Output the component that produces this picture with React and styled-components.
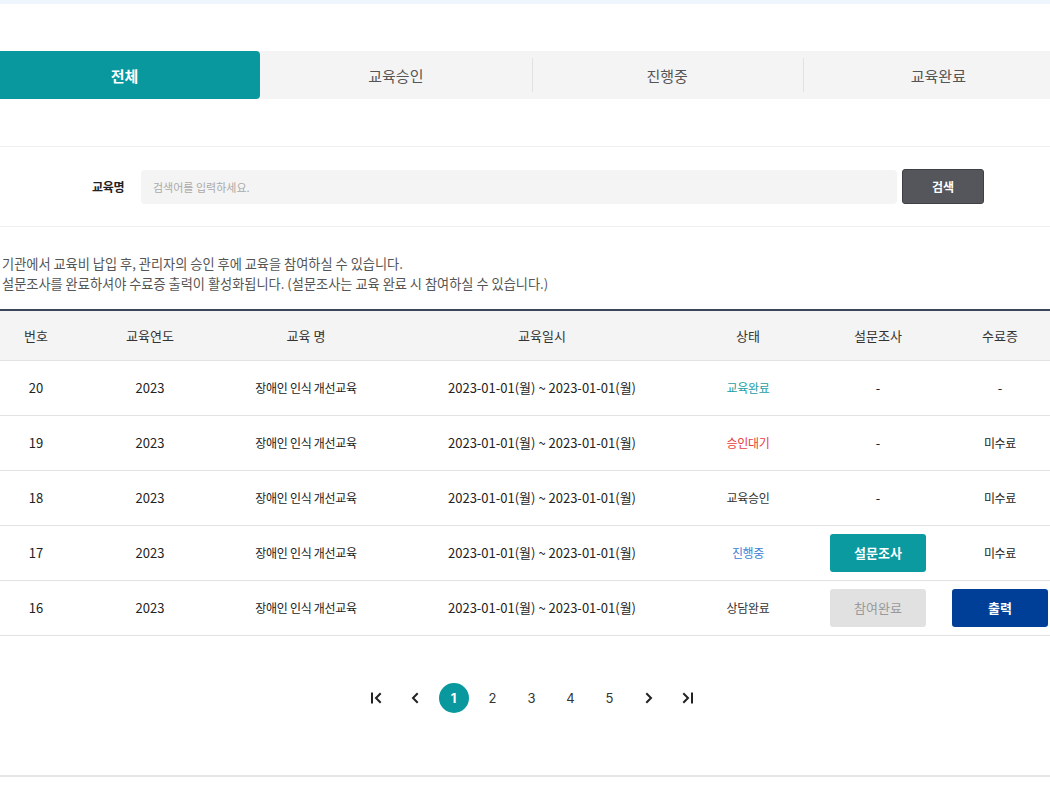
import React from 'react'
import styled, { createGlobalStyle } from 'styled-components'

const GlobalStyle = createGlobalStyle`
  html, body {
    margin: 0;
    padding: 0;
    background: #fff;
    overflow-x: hidden;
  }
  body {
    font-family: "Noto Sans CJK KR", "Noto Sans", sans-serif;
    color: #222;
  }
  * { box-sizing: border-box; }
`

const tabs = ['전체', '교육승인', '진행중', '교육완료']

const rows = [
  { no: 20, status: '교육완료', tone: 'teal', survey: '-', cert: '-' },
  { no: 19, status: '승인대기', tone: 'red', survey: '-', cert: '미수료' },
  { no: 18, status: '교육승인', tone: 'plain', survey: '-', cert: '미수료' },
  { no: 17, status: '진행중', tone: 'blue', survey: 'button', cert: '미수료' },
  { no: 16, status: '상담완료', tone: 'plain', survey: 'done', cert: 'print' },
]

const toneColors = {
  teal: '#1a9ea6',
  red: '#e8413d',
  blue: '#3b7fd8',
  plain: '#333',
}

const FirstIcon = () => (
  <svg width="14" height="14" viewBox="0 0 14 14" fill="none" stroke="#222" strokeWidth="2" strokeLinecap="square">
    <path d="M3 2.5v9" />
    <path d="M11 3l-4 4 4 4" />
  </svg>
)

const PrevIcon = () => (
  <svg width="14" height="14" viewBox="0 0 14 14" fill="none" stroke="#222" strokeWidth="2" strokeLinecap="square">
    <path d="M9 3l-4 4 4 4" />
  </svg>
)

const NextIcon = () => (
  <svg width="14" height="14" viewBox="0 0 14 14" fill="none" stroke="#222" strokeWidth="2" strokeLinecap="square">
    <path d="M5 3l4 4-4 4" />
  </svg>
)

const LastIcon = () => (
  <svg width="14" height="14" viewBox="0 0 14 14" fill="none" stroke="#222" strokeWidth="2" strokeLinecap="square">
    <path d="M3 3l4 4-4 4" />
    <path d="M11 2.5v9" />
  </svg>
)

const App = () => {
  return (
    <Page>
      <GlobalStyle />
      <TopBar />

      <TabRow>
        {tabs.map((t, i) => (
          <Tab key={t} $active={i === 0} $divider={i > 1}>
            {t}
          </Tab>
        ))}
      </TabRow>

      <SearchBox>
        <SearchLabel>교육명</SearchLabel>
        <SearchInput placeholder="검색어를 입력하세요." />
        <SearchButton>검색</SearchButton>
      </SearchBox>

      <Notice>
        기관에서 교육비 납입 후, 관리자의 승인 후에 교육을 참여하실 수 있습니다.
        <br />
        설문조사를 완료하셔야 수료증 출력이 활성화됩니다. (설문조사는 교육 완료 시 참여하실 수 있습니다.)
      </Notice>

      <Table>
        <colgroup>
          <col style={{ width: 94 }} />
          <col style={{ width: 134 }} />
          <col style={{ width: 178 }} />
          <col style={{ width: 294 }} />
          <col style={{ width: 118 }} />
          <col style={{ width: 142 }} />
          <col style={{ width: 102 }} />
        </colgroup>
        <thead>
          <tr>
            <Th>번호</Th>
            <Th>교육연도</Th>
            <Th>교육 명</Th>
            <Th>교육일시</Th>
            <Th>상태</Th>
            <Th>설문조사</Th>
            <Th>수료증</Th>
          </tr>
        </thead>
        <tbody>
          {rows.map((r) => (
            <tr key={r.no}>
              <Td>{r.no}</Td>
              <Td>2023</Td>
              <Td><KoText>장애인 인식 개선교육</KoText></Td>
              <Td>2023-01-01(월) ~ 2023-01-01(월)</Td>
              <Td>
                <KoText $tone={r.tone}>{r.status}</KoText>
              </Td>
              <Td>
                {r.survey === 'button' && <ActionButton $variant="teal">설문조사</ActionButton>}
                {r.survey === 'done' && <ActionButton $variant="disabled">참여완료</ActionButton>}
                {r.survey === '-' && '-'}
              </Td>
              <Td>
                {r.cert === 'print' && <ActionButton $variant="navy">출력</ActionButton>}
                {r.cert === '-' && '-'}
                {r.cert === '미수료' && <KoText>미수료</KoText>}
              </Td>
            </tr>
          ))}
        </tbody>
      </Table>

      <Pagination>
        <PageIcon><FirstIcon /></PageIcon>
        <PageIcon><PrevIcon /></PageIcon>
        {[1, 2, 3, 4, 5].map((n) => (
          <PageNum key={n} $active={n === 1}>{n}</PageNum>
        ))}
        <PageIcon><NextIcon /></PageIcon>
        <PageIcon><LastIcon /></PageIcon>
      </Pagination>

      <Footer />
    </Page>
  )
}

export default App

const Page = styled.div`
  width: 1050px;
  min-height: 788px;
`

const TopBar = styled.div`
  height: 4px;
  background: #eef5fd;
`

const TabRow = styled.div`
  display: flex;
  width: 1085px;
  margin: 47px 0 0 -11px;
  height: 48px;
  background: #f4f4f4;
`

const Tab = styled.div`
  flex: 1;
  display: flex;
  align-items: center;
  justify-content: center;
  font-size: 15px;
  position: relative;
  color: ${({ $active }) => ($active ? '#fff' : '#555')};
  font-weight: ${({ $active }) => ($active ? 700 : 400)};
  background: ${({ $active }) => ($active ? '#08989e' : 'transparent')};
  border-radius: ${({ $active }) => ($active ? '4px' : '0')};

  ${({ $divider }) => $divider && `
    &::before {
      content: '';
      position: absolute;
      left: 0;
      top: 7px;
      bottom: 7px;
      width: 1px;
      background: #e2e2e2;
    }
  `}
`

const SearchBox = styled.div`
  margin-top: 47px;
  border-top: 1px solid #efefef;
  border-bottom: 1px solid #efefef;
  height: 81px;
  display: flex;
  align-items: center;
  padding-left: 92px;
`

const SearchLabel = styled.label`
  font-size: 12px;
  font-weight: 700;
  color: #222;
  width: 49px;
  letter-spacing: -0.3px;
`

const SearchInput = styled.input`
  width: 756px;
  height: 34px;
  border: none;
  border-radius: 4px;
  background: #f4f4f4;
  padding: 0 12px;
  font-family: inherit;
  font-size: 11px;
  color: #333;
  outline: none;
  &::placeholder {
    color: #aaa;
  }
`

const SearchButton = styled.button`
  margin-left: 5px;
  width: 82px;
  height: 35px;
  border: 1px solid #3e4046;
  border-radius: 3px;
  background: #54565c;
  color: #fff;
  font-family: inherit;
  font-size: 12px;
  font-weight: 700;
`

const Notice = styled.p`
  margin: 27px 0 0 2px;
  font-size: 13.2px;
  line-height: 20px;
  color: #555;
`

const Table = styled.table`
  margin: 15px 0 0 -11px;
  width: 1062px;
  table-layout: fixed;
  border-collapse: collapse;
  border-top: 2px solid #3c4559;
`

const Th = styled.th`
  height: 50px;
  background: #f4f4f4;
  font-size: 13px;
  font-weight: 400;
  color: #333;
  text-align: center;
  border-bottom: 1px solid #e2e2e2;
  padding: 0;
`

const Td = styled.td`
  height: 55px;
  font-size: 13px;
  font-weight: 400;
  color: #222;
  text-align: center;
  border-bottom: 1px solid #e2e2e2;
  padding: 0 3px;
`

const KoText = styled.span`
  font-size: 12px;
  letter-spacing: -0.3px;
  color: ${({ $tone }) => toneColors[$tone] || '#222'};
`

const ActionButton = styled.button`
  width: 96px;
  height: 38px;
  border: none;
  border-radius: 3px;
  font-family: inherit;
  font-size: 13px;
  font-weight: ${({ $variant }) => ($variant === 'disabled' ? 400 : 700)};
  color: ${({ $variant }) => ($variant === 'disabled' ? '#999' : '#fff')};
  background: ${({ $variant }) =>
    $variant === 'teal' ? '#0a9a9f' : $variant === 'navy' ? '#003f97' : '#e1e1e1'};
`

const Pagination = styled.div`
  display: flex;
  justify-content: center;
  align-items: center;
  gap: 9px;
  margin-top: 47px;
  height: 30px;
  padding-left: 13px;
`

const PageIcon = styled.span`
  width: 30px;
  height: 30px;
  display: flex;
  align-items: center;
  justify-content: center;
`

const PageNum = styled.span`
  width: 30px;
  height: 30px;
  border-radius: 50%;
  display: flex;
  align-items: center;
  justify-content: center;
  font-family: Inter, "Noto Sans", sans-serif;
  font-size: 13px;
  font-weight: ${({ $active }) => ($active ? 700 : 400)};
  color: ${({ $active }) => ($active ? '#fff' : '#333')};
  background: ${({ $active }) => ($active ? '#08989e' : 'transparent')};
`

const Footer = styled.div`
  margin-top: 62px;
  border-top: 2px solid #e6e6e6;
`
